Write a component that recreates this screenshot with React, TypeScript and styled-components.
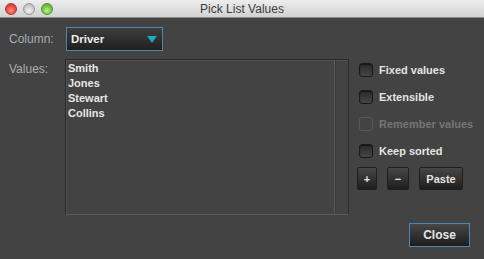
import React from 'react'
import styled, { createGlobalStyle } from 'styled-components'

const GlobalStyle = createGlobalStyle`
  html, body {
    margin: 0;
    padding: 0;
    background: #434343;
  }
  body {
    font-family: 'Liberation Sans', Arial, sans-serif;
  }
`

const Window = styled.div`
  width: 484px;
  height: 259px;
  display: flex;
  flex-direction: column;
  background: #434343;
  overflow: hidden;
`

const TitleBar = styled.div`
  height: 17px;
  display: flex;
  align-items: center;
  position: relative;
  background: linear-gradient(#ededed, #d2d2d2);
  border-bottom: 1px solid #8c8c8c;
`

const Lights = styled.div`
  display: flex;
  gap: 6px;
  padding-left: 5px;
`

const Light = styled.span<{ $tone: 'red' | 'gray' | 'green' }>`
  width: 12px;
  height: 12px;
  border-radius: 50%;
  box-sizing: border-box;
  border: 1px solid
    ${({ $tone }) => ($tone === 'red' ? '#b0342c' : $tone === 'green' ? '#4c9a2e' : '#9a9a9a')};
  background: ${({ $tone }) =>
    $tone === 'red'
      ? 'radial-gradient(circle at 50% 65%, #ff9a8c 0%, #f0524a 45%, #c8302a 100%)'
      : $tone === 'green'
      ? 'radial-gradient(circle at 50% 65%, #c8f29a 0%, #7ccc4a 45%, #4f9a2a 100%)'
      : 'radial-gradient(circle at 50% 65%, #f4f4f4 0%, #d0d0d0 50%, #a8a8a8 100%)'};
`

const Title = styled.div`
  position: absolute;
  left: 0;
  right: 0;
  text-align: center;
  font-size: 12px;
  color: #3c3c3c;
  pointer-events: none;
`

const Body = styled.div`
  flex: 1;
  display: flex;
  flex-direction: column;
  padding: 9px 14px 0 9px;
`

const Row = styled.div<{ $top?: number; $center?: boolean }>`
  display: flex;
  align-items: ${({ $center }) => ($center ? 'center' : 'flex-start')};
  margin-top: ${({ $top }) => $top ?? 0}px;
`

const FieldLabel = styled.div<{ $offset?: number }>`
  width: 56px;
  flex-shrink: 0;
  font-size: 12px;
  line-height: 16px;
  color: #a8adb3;
  margin-top: ${({ $offset }) => $offset ?? 0}px;
`

const Combo = styled.div`
  box-sizing: border-box;
  width: 97px;
  height: 24px;
  margin-left: 1px;
  display: flex;
  align-items: center;
  justify-content: space-between;
  padding: 0 5px 0 4px;
  border: 1px solid #4a86ae;
  background: linear-gradient(#3e3e3e, #1f1f1f);
  color: #ececec;
  font-size: 11.5px;
  font-weight: bold;
`

const ListBox = styled.div`
  box-sizing: border-box;
  flex-shrink: 0;
  width: 284px;
  height: 156px;
  display: flex;
  border: 1px solid #2a2a2a;
  border-right-color: #2e2e2e;
  border-bottom-color: #5a5a5a;
  box-shadow: inset 1px 1px 0 #505050;
`

const Items = styled.div`
  flex: 1;
  padding: 1px 0 0 2px;
`

const Item = styled.div`
  font-size: 11px;
  font-weight: bold;
  line-height: 15px;
  color: #e6e6e6;
`

const ScrollTrack = styled.div`
  width: 13px;
  border-left: 1px solid #5a5a5a;
  box-shadow: inset 1px 0 0 #3a3a3a;
`

const SidePanel = styled.div`
  margin-left: 8px;
  padding-top: 4px;
  display: flex;
  flex-direction: column;
  white-space: nowrap;
`

const CheckRow = styled.label<{ $disabled?: boolean }>`
  display: flex;
  align-items: center;
  gap: 6px;
  height: 14px;
  margin-bottom: 13px;
  margin-left: 2px;
  font-size: 11px;
  font-weight: bold;
  color: ${({ $disabled }) => ($disabled ? '#767676' : '#e4e4e4')};
`

const Box = styled.span<{ $disabled?: boolean }>`
  box-sizing: border-box;
  flex-shrink: 0;
  width: 14px;
  height: 14px;
  border-radius: 3px;
  border: 1px solid ${({ $disabled }) => ($disabled ? '#585858' : '#1a1a1a')};
  background: ${({ $disabled }) =>
    $disabled ? 'transparent' : 'linear-gradient(#2a2a2a, #454545)'};
  box-shadow: ${({ $disabled }) => ($disabled ? 'none' : 'inset 0 1px 1px rgba(0,0,0,0.5)')};
`

const ButtonRow = styled.div`
  display: flex;
  gap: 10px;
  margin-top: -4px;
`

const SmallButton = styled.button<{ $w: number }>`
  box-sizing: border-box;
  width: ${({ $w }) => $w}px;
  height: 23px;
  padding: 0;
  border: 1px solid #1e1e1e;
  border-radius: 2px;
  background: linear-gradient(#474747, #1e1e1e);
  color: #e4e4e4;
  font-family: 'Liberation Sans', Arial, sans-serif;
  font-size: 11px;
  font-weight: bold;
`

const Footer = styled.div`
  display: flex;
  justify-content: flex-end;
  margin-top: 8px;
`

const CloseButton = styled.button`
  box-sizing: border-box;
  width: 61px;
  height: 24px;
  padding: 0;
  border: 1px solid #4a88b4;
  background: linear-gradient(#474747, #1c1c1c);
  color: #e6e6e6;
  font-family: 'Liberation Sans', Arial, sans-serif;
  font-size: 12px;
  font-weight: bold;
`

const values = ['Smith', 'Jones', 'Stewart', 'Collins']

const options = [
  { label: 'Fixed values' },
  { label: 'Extensible' },
  { label: 'Remember values', disabled: true },
  { label: 'Keep sorted' },
]

export default function App() {
  return (
    <>
      <GlobalStyle />
      <Window>
        <TitleBar>
          <Lights>
            <Light $tone="red" />
            <Light $tone="gray" />
            <Light $tone="green" />
          </Lights>
          <Title>Pick List Values</Title>
        </TitleBar>
        <Body>
          <Row $center>
            <FieldLabel>Column:</FieldLabel>
            <Combo>
              <span>Driver</span>
              <svg width="10" height="7" viewBox="0 0 10 7">
                <path d="M0 0 H10 L5 7 Z" fill="#1fa6c2" />
              </svg>
            </Combo>
          </Row>
          <Row $top={8}>
            <FieldLabel $offset={2}>Values:</FieldLabel>
            <ListBox>
              <Items>
                {values.map((v) => (
                  <Item key={v}>{v}</Item>
                ))}
              </Items>
              <ScrollTrack />
            </ListBox>
            <SidePanel>
              {options.map((o) => (
                <CheckRow key={o.label} $disabled={o.disabled}>
                  <Box $disabled={o.disabled} />
                  {o.label}
                </CheckRow>
              ))}
              <ButtonRow>
                <SmallButton $w={20}>+</SmallButton>
                <SmallButton $w={22}>−</SmallButton>
                <SmallButton $w={44}>Paste</SmallButton>
              </ButtonRow>
            </SidePanel>
          </Row>
          <Footer>
            <CloseButton>Close</CloseButton>
          </Footer>
        </Body>
      </Window>
    </>
  )
}
